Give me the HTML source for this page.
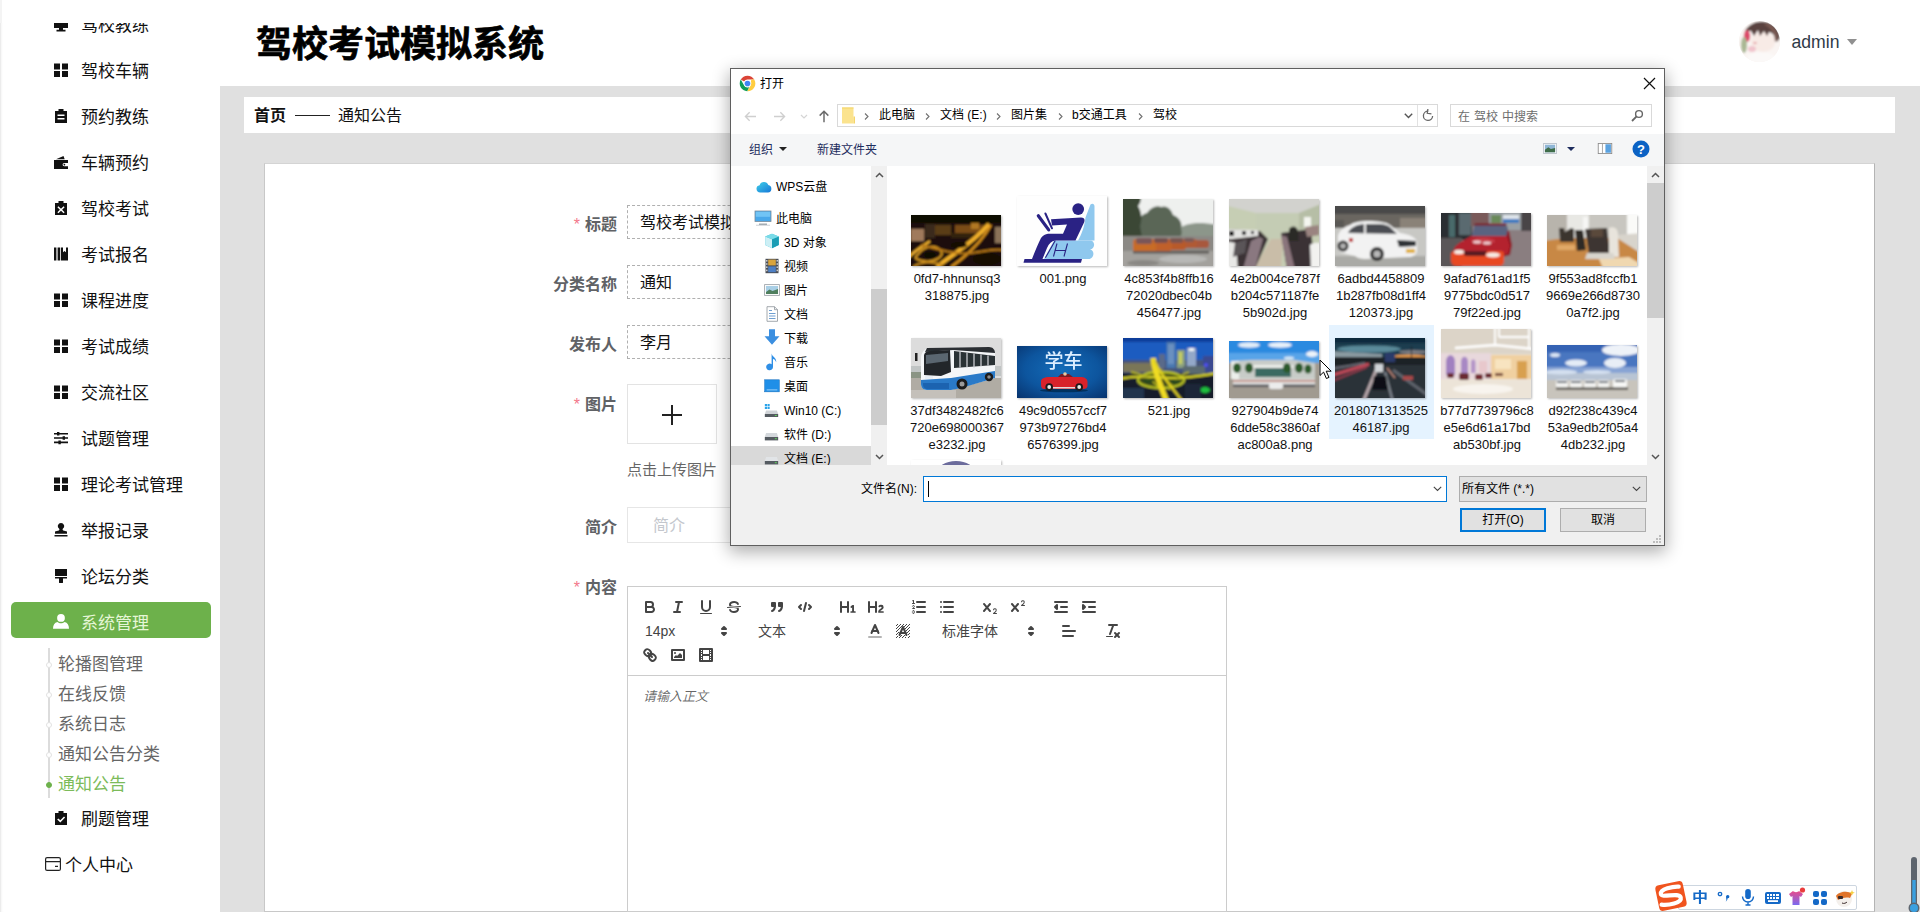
<!DOCTYPE html>
<html lang="zh-CN">
<head>
<meta charset="utf-8">
<title>驾校考试模拟系统</title>
<style>
*{box-sizing:border-box;margin:0;padding:0}
html,body{width:1920px;height:912px;overflow:hidden;background:#e0e0e0;
  font-family:"Liberation Sans","Noto Sans CJK SC",sans-serif;color:#000}
.abs{position:absolute}
/* ---------- sidebar ---------- */
#side{position:absolute;left:0;top:0;width:220px;height:912px;background:#fff;overflow:hidden;
  box-shadow:inset 1px 0 0 #ececec, inset 3px 0 2px -1px #f6f6f6}
.mi{position:absolute;left:0;width:220px;height:46px;line-height:46px;font-size:17px;color:#111}
.mi svg{position:absolute;left:54px;top:15px;width:14px;height:14px;fill:#111}
.mi span{position:absolute;left:81px;top:1px;white-space:nowrap}
#act{position:absolute;left:11px;top:602px;width:200px;height:36px;background:#6db14b;border-radius:5px}
.sub{position:absolute;left:58px;font-size:17px;color:#666;line-height:30px;height:30px;white-space:nowrap}
.dot{position:absolute;left:46px;width:6px;height:6px;border-radius:50%;background:#fff;border:1px solid #e2e2e2}
/* ---------- header ---------- */
#head{position:absolute;left:220px;top:0;width:1700px;height:86px;background:#fff}
#title{position:absolute;left:36px;top:16px;font-size:36px;font-weight:700;-webkit-text-stroke:0.700px #000;line-height:58px;white-space:nowrap;color:#000}
#crumb{position:absolute;left:244px;top:97px;width:1651px;height:36px;background:#fff;font-size:16px;line-height:38px;color:#111}
#card{position:absolute;left:264px;top:163px;width:1611px;height:749px;border-bottom:none;background:#fff;border:1px solid #c8c8c8;border-top-color:#d4d4d4;border-right-color:#b4b4b4}
.lab{position:absolute;left:497px;width:120px;font-size:16px;font-weight:700;color:#606266;white-space:nowrap;text-align:right;line-height:24px}
.lab i{font-style:normal;color:#f3788a;font-weight:400;margin-right:5px}
.inp{position:absolute;left:627px;width:400px;height:34px;border:1px dashed #b0b0b0;font-size:16px;line-height:34px;padding-left:12px;color:#111;background:#fff;white-space:nowrap}
/* ---------- quill ---------- */
#qtb{position:absolute;left:627px;top:586px;width:600px;height:90px;border:1px solid #ccc;background:#fff}
#qed{position:absolute;left:627px;top:675px;width:600px;height:237px;border-bottom:none;border:1px solid #ccc;background:#fff}
#qtb svg{position:absolute;width:18px;height:18px}
.qs{fill:none;stroke:#444;stroke-width:2;stroke-linecap:round;stroke-linejoin:round}
.qt{stroke-width:1}
.qf{fill:#444}
.qsf{fill:#444;stroke:#444;stroke-width:2;stroke-linecap:round;stroke-linejoin:round}
.ql{position:absolute;font-size:14px;color:#444;line-height:24px;top:32px;white-space:nowrap}
</style>
</head>
<body>
<div id="side">
<svg width="0" height="0" style="position:absolute"><defs>
<g id="i-grid"><rect x="0" y="0.5" width="6" height="6"/><rect x="8" y="0.5" width="6" height="6"/><rect x="0" y="8" width="6" height="6"/><rect x="8" y="8" width="6" height="6"/></g>
</defs></svg>
<div class="mi" style="top:2px"><svg viewBox="0 0 14 14" style="top:16px"><path d="M0 0h14v10H0zM5 10h4v1.800h2.500v1.700h-9v-1.700H5z"/></svg><span>驾校教练</span></div>
<div class="abs" style="left:0;top:0;width:220px;height:23px;background:#fff;box-shadow:inset 2px 0 0 #f4f4f4"></div>
<div class="mi" style="top:48px"><svg viewBox="0 0 14 14"><use href="#i-grid"/></svg><span>驾校车辆</span></div>
<div class="mi" style="top:94px"><svg viewBox="0 0 14 14"><path d="M4.5 0h5v2H13v12H1V2h3.5zM3.5 5.5v1.6h7V5.5zM3.5 9v1.6h7V9z" fill-rule="evenodd"/></svg><span>预约教练</span></div>
<div class="mi" style="top:140px"><svg viewBox="0 0 14 14"><path d="M2 4.2L9.5 1l1.2 3.2zM0 5h14v3H10.2a1.6 1.6 0 0 0 0 3.2H14V14H0z M10.4 8.8a.8.8 0 1 0 .01 0z" fill-rule="evenodd"/></svg><span>车辆预约</span></div>
<div class="mi" style="top:186px"><svg viewBox="0 0 14 14"><path d="M4.5 0h5v2H13v12H1V2h3.5zM4.4 5.2L3.4 6.2 5.9 8.7 3.4 11.2l1 1L7 9.7l2.6 2.5 1-1L8.1 8.7l2.5-2.5-1-1L7 7.7z" fill-rule="evenodd"/></svg><span>驾校考试</span></div>
<div class="mi" style="top:232px"><svg viewBox="0 0 14 14"><path d="M0 .5h2.400v13H0zM3.600 .5h2.600v13H3.600zM7 .5h2v4.800l1.500-1.300L12 5.300V.5h2v13H7z"/></svg><span>考试报名</span></div>
<div class="mi" style="top:278px"><svg viewBox="0 0 14 14"><use href="#i-grid"/></svg><span>课程进度</span></div>
<div class="mi" style="top:324px"><svg viewBox="0 0 14 14"><use href="#i-grid"/></svg><span>考试成绩</span></div>
<div class="mi" style="top:370px"><svg viewBox="0 0 14 14"><use href="#i-grid"/></svg><span>交流社区</span></div>
<div class="mi" style="top:416px"><svg viewBox="0 0 14 14"><path d="M0 2h3v-1h2.4v1H14v1.6H5.4v1H3v-1H0zM0 6.2h8.6v-1H11v1h3v1.6h-3v1H8.6v-1H0zM0 10.6h4.4v-1h2.4v1H14v1.6H6.8v1H4.4v-1H0z"/></svg><span>试题管理</span></div>
<div class="mi" style="top:462px"><svg viewBox="0 0 14 14"><use href="#i-grid"/></svg><span>理论考试管理</span></div>
<div class="mi" style="top:508px"><svg viewBox="0 0 14 14"><path d="M7 0a3.1 3.1 0 0 1 2 5.5c-.6.6-.6 1.600 .2 1.900l3.800 1v2.400H1V8.400l3.800-1c.8-.3.8-1.300.2-1.900A3.100 3.100 0 0 1 7 0zM.5 12h13v1.600H.5z"/></svg><span>举报记录</span></div>
<div class="mi" style="top:554px"><svg viewBox="0 0 14 14"><path d="M1 0h12v7H1zM1 8h12v1.600H9v3.400a2 2 0 0 1-4 0V9.600H1z"/></svg><span>论坛分类</span></div>
<div id="act"></div>
<div class="mi" style="top:597px;color:#e6f6d6"><svg viewBox="0 0 14 14" style="fill:#fff;top:16.500px;left:53px;width:16px;height:16px"><path d="M7 0a3.400 3.400 0 0 1 0 6.800A3.400 3.400 0 0 1 7 0zM3.800 7c1 .8 2 1.200 3.200 1.200S9.200 7.800 10.200 7C12.600 7.600 14 9.600 14 13H0C0 9.600 1.400 7.600 3.800 7z"/></svg><span style="top:4px">系统管理</span></div>
<div class="abs" style="left:48px;top:648px;width:2px;height:150px;background:#dcdcdc"></div>
<div class="dot" style="top:662px"></div><div class="sub" style="top:650px">轮播图管理</div>
<div class="dot" style="top:692px"></div><div class="sub" style="top:680px">在线反馈</div>
<div class="dot" style="top:722px"></div><div class="sub" style="top:710px">系统日志</div>
<div class="dot" style="top:752px"></div><div class="sub" style="top:740px">通知公告分类</div>
<div class="dot" style="top:782px;background:#6db14b;border-color:#6db14b"></div><div class="sub" style="top:770px;color:#7cbb5a">通知公告</div>
<div class="mi" style="top:796px"><svg viewBox="0 0 14 14"><path d="M4.500 0h5v2H13v12H1V2h3.500zM10 5.400L6.300 9.300 4.300 7.400 3.200 8.500l3.100 3 4.800-5z" fill-rule="evenodd"/></svg><span>刷题管理</span></div>
<div class="mi" style="top:842px"><svg viewBox="0 0 16 14" style="left:45px;width:16px;fill:none;stroke:#222;stroke-width:1.200"><rect x=".6" y=".6" width="14.800" height="12.800" rx="1.500"/><path d="M.6 4.600h14.800M10 9.300h3"/></svg><span style="left:65px">个人中心</span></div>
</div>
<!-- HEADER -->
<div id="head"><div id="title">驾校考试模拟系统</div>
<div class="abs" style="left:1519px;top:21px;width:41px;height:41px;border-radius:50%;overflow:hidden;background:#f8f2f0">
<svg viewBox="0 0 41 41" width="41" height="41"><defs><filter id="bl"><feGaussianBlur stdDeviation=".8"/></filter></defs><g filter="url(#bl)"><rect x="-3" y="-3" width="47" height="47" fill="#faf5f3"/><ellipse cx="24" cy="21" rx="12" ry="10" fill="#f8ebe6"/><path d="M6 10C10 2 20-1 28 1s13 8 13 16l-3 4c-1-5-4-9-8-10l-2 4-3-5-4 5-2-6-4 6-3-5z" fill="#5a4341"/><path d="M26 2c8 1 13 8 13 16l-3 3c0-8-4-14-10-17z" fill="#7a5a52"/><ellipse cx="8" cy="15" rx="3.200" ry="6" fill="#dc4a6a"/><ellipse cx="5" cy="24" rx="3" ry="8" fill="#aab894"/><ellipse cx="13" cy="28" rx="4" ry="3" fill="#f0c4cc"/><ellipse cx="16" cy="22" rx="2" ry="1" fill="#e6a0a8"/><ellipse cx="22" cy="37" rx="14" ry="6" fill="#fbf9f8"/></g></svg></div>
<div class="abs" style="left:1571.500px;top:29.500px;font-size:17.600px;line-height:24px;color:#2f3a48">admin</div>
<div class="abs" style="left:1626.500px;top:39px;width:0;height:0;border-left:5px solid transparent;border-right:5px solid transparent;border-top:6.500px solid #909090"></div>
</div>
<div id="crumb"><b class="abs" style="left:10px">首页</b><span class="abs" style="left:51px;top:18px;width:35px;height:1px;background:#222"></span><span class="abs" style="left:94px">通知公告</span></div>
<div id="card"></div>
<!-- FORM -->
<div class="lab" style="top:213px"><i>*</i>标题</div><div class="inp" style="top:205px">驾校考试模拟系统</div>
<div class="lab" style="top:273px">分类名称</div><div class="inp" style="top:265px">通知</div>
<div class="lab" style="top:333px">发布人</div><div class="inp" style="top:325px">李月</div>
<div class="lab" style="top:393px"><i>*</i>图片</div>
<div class="abs" style="left:627px;top:384px;width:90px;height:60px;border:1px solid #e3e3e3;background:#fff"></div>
<div class="abs" style="left:662px;top:414px;width:20px;height:2px;background:#222"></div><div class="abs" style="left:671px;top:405px;width:2px;height:20px;background:#222"></div>
<div class="abs" style="left:627px;top:459px;font-size:15px;line-height:22px;color:#666;white-space:nowrap">点击上传图片</div>
<div class="lab" style="top:516px">简介</div>
<div class="abs" style="left:627px;top:507px;width:400px;height:36px;border:1px solid #e6e6e6;background:#fff;font-size:16px;line-height:36px;padding-left:25px;color:#c4c7cd">简介</div>
<div class="lab" style="top:576px"><i>*</i>内容</div>
<div id="qtb">
<svg viewBox="0 0 18 18" style="left:13px;top:11px"><path class="qs" d="M5,4H9.5A2.5,2.5,0,0,1,12,6.500v0A2.5,2.5,0,0,1,9.500,9H5V4Z"/><path class="qs" d="M5,9h5.500A2.5,2.5,0,0,1,13,11.500v0A2.5,2.5,0,0,1,10.500,14H5V9Z"/></svg>
<svg viewBox="0 0 18 18" style="left:41px;top:11px"><line class="qs" x1="7" x2="13" y1="4" y2="4"/><line class="qs" x1="5" x2="11" y1="14" y2="14"/><line class="qs" x1="8" x2="10" y1="14" y2="4"/></svg>
<svg viewBox="0 0 18 18" style="left:69px;top:11px"><path class="qs" d="M5,3V9a4.012,4.012,0,0,0,4,4H9a4.012,4.012,0,0,0,4-4V3"/><rect class="qf" height="1" rx="0.5" ry="0.5" width="12" x="3" y="15"/></svg>
<svg viewBox="0 0 18 18" style="left:97px;top:11px"><line class="qs qt" x1="15.5" x2="2.5" y1="8.500" y2="9.500"/><path class="qf" d="M9.007,8C6.542,7.791,6,7.519,6,6.500,6,5.792,7.283,5,9,5c1.571,0,2.765.679,2.969,1.309a1,1,0,0,0,1.900-.617C13.356,4.106,11.354,3,9,3,6.200,3,4,4.538,4,6.500a3.200,3.200,0,0,0,.5,1.843Z"/><path class="qf" d="M8.984,10C11.457,10.208,12,10.479,12,11.500c0,0.708-1.283,1.500-3,1.500-1.571,0-2.765-.679-2.969-1.309a1,1,0,1,0-1.900.617C4.644,13.894,6.646,15,9,15c2.800,0,5-1.538,5-3.500a3.200,3.200,0,0,0-.5-1.843Z"/></svg>
<svg viewBox="0 0 18 18" style="left:140px;top:11px"><rect class="qsf" height="3" width="3" x="4" y="5"/><rect class="qsf" height="3" width="3" x="11" y="5"/><path class="qsf" fill-rule="evenodd" d="M7,8c0,4.031-3,5-3,5"/><path class="qsf" fill-rule="evenodd" d="M14,8c0,4.031-3,5-3,5"/></svg>
<svg viewBox="0 0 18 18" style="left:168px;top:11px"><polyline class="qs" points="5 7 3 9 5 11"/><polyline class="qs" points="13 7 15 9 13 11"/><line class="qs" x1="10" x2="8" y1="5" y2="13"/></svg>
<svg viewBox="0 0 18 18" style="left:211px;top:11px"><path class="qf" d="M10,4V14a1,1,0,0,1-2,0V10H3v4a1,1,0,0,1-2,0V4A1,1,0,0,1,3,4V8H8V4a1,1,0,0,1,2,0Zm6.068,9.209H14.990V7.599a.541.541,0,0,0-.605-.605h-.627a1.011,1.011,0,0,0-.748.297L11.645,8.566a.544.544,0,0,0-.022.858l.286.308a.539.539,0,0,0,.847.033l.099-.088a1.214,1.214,0,0,0,.242-.353h.022s-.011.309-.011.605V13.209H12.041a.541.541,0,0,0-.605.605v.439a.541.541,0,0,0,.605.605h4.027a.541.541,0,0,0,.605-.605v-.439A.541.541,0,0,0,16.068,13.209Z"/></svg>
<svg viewBox="0 0 18 18" style="left:239px;top:11px"><path class="qf" d="M16.740,13.814v.439a.541.541,0,0,1-.605.605H11.855a.584.584,0,0,1-.649-.605V14.013c0-2.905,3.399-3.422,3.399-4.555a.777.777,0,0,0-.847-.781,1.177,1.177,0,0,0-.836.385c-.275.264-.561.374-.858.132l-.429-.341c-.308-.242-.385-.518-.154-.814a2.972,2.972,0,0,1,2.454-1.177,2.454,2.454,0,0,1,2.684,2.409c0,2.453-3.179,2.927-3.278,3.938h2.794A.541.541,0,0,1,16.740,13.814ZM9,3A1,1,0,0,0,8,4V8H3V4A1,1,0,0,0,1,4V14a1,1,0,0,0,2,0V10H8v4a1,1,0,0,0,2,0V4A1,1,0,0,0,9,3Z"/></svg>
<svg viewBox="0 0 18 18" style="left:282px;top:11px"><line class="qs" x1="7" x2="15" y1="4" y2="4"/><line class="qs" x1="7" x2="15" y1="9" y2="9"/><line class="qs" x1="7" x2="15" y1="14" y2="14"/><line class="qs qt" x1="2.5" x2="4.5" y1="5.500" y2="5.500"/><path class="qf" d="M3.500,6A0.500,0.500,0,0,1,3,5.500V3.085l-0.276.138A0.500,0.500,0,0,1,2.053,3c-0.124-.247-0.023-0.324.224-0.447l1-.5A0.500,0.500,0,0,1,4,2.500v3A0.500,0.500,0,0,1,3.500,6Z"/><path class="qs qt" d="M4.500,10.500h-2c0-.234,1.850-1.076,1.850-2.234A0.959,0.959,0,0,0,2.500,8.156"/><path class="qs qt" d="M2.500,14.846a0.959,0.959,0,0,0,1.850-.109A0.700,0.700,0,0,0,3.750,14a0.688,0.688,0,0,0,.6-0.736,0.959,0.959,0,0,0-1.850-.109"/></svg>
<svg viewBox="0 0 18 18" style="left:310px;top:11px"><line class="qs" x1="6" x2="15" y1="4" y2="4"/><line class="qs" x1="6" x2="15" y1="9" y2="9"/><line class="qs" x1="6" x2="15" y1="14" y2="14"/><line class="qs" x1="3" x2="3" y1="4" y2="4"/><line class="qs" x1="3" x2="3" y1="9" y2="9"/><line class="qs" x1="3" x2="3" y1="14" y2="14"/></svg>
<svg viewBox="0 0 18 18" style="left:353px;top:11px"><path class="qf" d="M15.500,15H13.861a3.858,3.858,0,0,0,1.914-2.975,1.800,1.800,0,0,0-1.600-1.751A1.921,1.921,0,0,0,12.021,11.700a0.500,0.500,0,1,0,.957.291h0a0.914,0.914,0,0,1,1.053-.725,0.810,0.810,0,0,1,.744.762c0,1.076-1.170,1.870-1.940,2.431A1.456,1.456,0,0,0,12,15.500a0.500,0.500,0,0,0,.5.500h3A0.500,0.500,0,0,0,15.500,15Z"/><path class="qf" d="M9.650,5.241a1,1,0,0,0-1.409.108L6,7.964,3.759,5.349A1,1,0,0,0,2.192,6.592L4.684,9.500,2.241,12.350A1,1,0,0,0,3.710,13.707L6,11.036,8.241,13.650a1,1,0,1,0,1.567-1.243L7.316,9.500,9.759,6.651A1,1,0,0,0,9.650,5.241Z"/></svg>
<svg viewBox="0 0 18 18" style="left:381px;top:11px"><path class="qf" d="M15.500,7H13.861a4.015,4.015,0,0,0,1.914-2.975,1.800,1.800,0,0,0-1.600-1.751A1.922,1.922,0,0,0,12.021,3.700a0.500,0.500,0,1,0,.957.291,0.917,0.917,0,0,1,1.053-.725,0.810,0.810,0,0,1,.744.762c0,1.077-1.164,1.925-1.934,2.486A1.423,1.423,0,0,0,12,7.500a0.500,0.500,0,0,0,.5.500h3A0.500,0.500,0,0,0,15.500,7Z"/><path class="qf" d="M9.651,5.241a1,1,0,0,0-1.410.108L6,7.964,3.759,5.349a1,1,0,1,0-1.519,1.300L4.683,9.500,2.241,12.350a1,1,0,1,0,1.519,1.300L6,11.036,8.241,13.650a1,1,0,0,0,1.519-1.300L7.317,9.500,9.759,6.651A1,1,0,0,0,9.651,5.241Z"/></svg>
<svg viewBox="0 0 18 18" style="left:424px;top:11px"><line class="qs" x1="3" x2="15" y1="14" y2="14"/><line class="qs" x1="3" x2="15" y1="4" y2="4"/><line class="qs" x1="9" x2="15" y1="9" y2="9"/><polyline class="qs" points="5 7 5 11 3 9 5 7"/></svg>
<svg viewBox="0 0 18 18" style="left:452px;top:11px"><line class="qs" x1="3" x2="15" y1="14" y2="14"/><line class="qs" x1="3" x2="15" y1="4" y2="4"/><line class="qs" x1="9" x2="15" y1="9" y2="9"/><polyline class="qsf" points="3 7 3 11 5 9 3 7"/></svg>
<svg viewBox="0 0 18 18" style="left:87px;top:35px"><polygon class="qs" points="7 11 9 13 11 11 7 11"/><polygon class="qs" points="7 7 9 5 11 7 7 7"/></svg>
<svg viewBox="0 0 18 18" style="left:200px;top:35px"><polygon class="qs" points="7 11 9 13 11 11 7 11"/><polygon class="qs" points="7 7 9 5 11 7 7 7"/></svg>
<svg viewBox="0 0 18 18" style="left:238px;top:35px"><line class="qs" style="opacity:.4" x1="3" x2="15" y1="15" y2="15"/><polyline class="qs" points="5.500 11 9 3 12.500 11"/><line class="qs" x1="11.630" x2="6.380" y1="9" y2="9"/></svg>
<svg viewBox="0 0 18 18" style="left:266px;top:35px"><rect class="qf" height="1" width="1" x="4" y="4"/><rect class="qf" height="1" width="1" x="2" y="6"/><rect class="qf" height="1" width="1" x="3" y="5"/><rect class="qf" height="1" width="1" x="4" y="7"/><rect class="qf" height="1" width="1" x="2" y="12"/><rect class="qf" height="1" width="1" x="2" y="9"/><rect class="qf" height="1" width="1" x="2" y="15"/><rect class="qf" height="1" width="1" x="3" y="8"/><rect class="qf" height="1" width="1" x="12" y="2"/><rect class="qf" height="1" width="1" x="11" y="3"/><rect class="qf" height="1" width="1" x="2" y="3"/><rect class="qf" height="1" width="1" x="6" y="2"/><rect class="qf" height="1" width="1" x="3" y="2"/><rect class="qf" height="1" width="1" x="5" y="3"/><rect class="qf" height="1" width="1" x="9" y="2"/><rect class="qf" height="1" width="1" x="15" y="14"/><rect class="qf" height="1" width="1" x="13" y="7"/><rect class="qf" height="1" width="1" x="15" y="5"/><rect class="qf" height="1" width="1" x="14" y="6"/><rect class="qf" height="1" width="1" x="15" y="8"/><rect class="qf" height="1" width="1" x="14" y="9"/><rect class="qf" height="1" width="1" x="14" y="3"/><rect class="qf" height="1" width="1" x="15" y="2"/><rect class="qf" height="1" width="1" x="12" y="5"/><rect class="qf" height="1" width="1" x="13" y="4"/><rect class="qf" height="1" width="1" x="9" y="14"/><rect class="qf" height="1" width="1" x="8" y="15"/><rect class="qf" height="1" width="1" x="5" y="15"/><rect class="qf" height="1" width="1" x="11" y="15"/><rect class="qf" height="1" width="1" x="14" y="15"/><rect class="qf" height="1" width="1" x="15" y="11"/><rect class="qf" height="1" width="1" x="5" y="6"/><rect class="qf" height="1" width="1" x="3" y="11"/><rect class="qf" height="1" width="1" x="3" y="14"/><rect class="qf" height="1" width="1" x="13" y="10"/><rect class="qf" height="1" width="1" x="14" y="12"/><rect class="qf" height="1" width="1" x="6" y="14"/><rect class="qf" height="1" width="1" x="10" y="13"/><rect class="qf" height="1" width="1" x="7" y="13"/><rect class="qf" height="1" width="1" x="8" y="3"/><rect class="qf" height="1" width="1" x="6" y="5"/><rect class="qf" height="1" width="1" x="4" y="10"/><rect class="qf" height="1" width="1" x="12" y="8"/><rect class="qf" height="1" width="1" x="11" y="6"/><rect class="qf" height="1" width="1" x="7" y="4"/><rect class="qf" height="1" width="1" x="10" y="4"/><polyline class="qs" points="5.500 13 9 5 12.500 13"/><line class="qs" x1="11.630" x2="6.380" y1="11" y2="11"/></svg>
<svg viewBox="0 0 18 18" style="left:394px;top:35px"><polygon class="qs" points="7 11 9 13 11 11 7 11"/><polygon class="qs" points="7 7 9 5 11 7 7 7"/></svg>
<svg viewBox="0 0 18 18" style="left:432px;top:35px"><line class="qs" x1="3" x2="15" y1="9" y2="9"/><line class="qs" x1="3" x2="13" y1="14" y2="14"/><line class="qs" x1="3" x2="9" y1="4" y2="4"/></svg>
<svg viewBox="0 0 18 18" style="left:476px;top:35px"><line class="qs" x1="5" x2="13" y1="3" y2="3"/><line class="qs" x1="6" x2="9.350" y1="12" y2="3"/><line class="qs" x1="11" x2="15" y1="11" y2="15"/><line class="qs" x1="15" x2="11" y1="11" y2="15"/><rect class="qf" height="1" rx="0.5" ry="0.5" width="7" x="2" y="14"/></svg>
<svg viewBox="0 0 18 18" style="left:13px;top:59px"><line class="qs" x1="7" x2="11" y1="7" y2="11"/><path class="qs" d="M8.900,4.577a3.476,3.476,0,0,1,.360,4.679A3.476,3.476,0,0,1,4.577,8.900C3.185,7.500,2.035,6.400,4.217,4.217S7.500,3.185,8.900,4.577Z"/><path class="qs" d="M13.423,9.100a3.476,3.476,0,0,0-4.679-.360,3.476,3.476,0,0,0,.360,4.679c1.392,1.392,2.500,2.542,4.679.360S14.815,10.500,13.423,9.100Z"/></svg>
<svg viewBox="0 0 18 18" style="left:41px;top:59px"><rect class="qs" height="10" width="12" x="3" y="4"/><circle class="qf" cx="6" cy="7" r="1"/><polyline class="qf" points="5 12 5 11 7 9 8 10 11 7 13 9 13 12 5 12"/></svg>
<svg viewBox="0 0 18 18" style="left:69px;top:59px"><rect class="qs" height="12" width="12" x="3" y="3"/><rect class="qf" height="12" width="1" x="5" y="3"/><rect class="qf" height="12" width="1" x="12" y="3"/><rect class="qf" height="2" width="8" x="5" y="8"/><rect class="qf" height="1" width="3" x="3" y="5"/><rect class="qf" height="1" width="3" x="3" y="7"/><rect class="qf" height="1" width="3" x="3" y="10"/><rect class="qf" height="1" width="3" x="3" y="12"/><rect class="qf" height="1" width="3" x="12" y="5"/><rect class="qf" height="1" width="3" x="12" y="7"/><rect class="qf" height="1" width="3" x="12" y="10"/><rect class="qf" height="1" width="3" x="12" y="12"/></svg>
<span class="ql" style="left:17px;top:32px">14px</span>
<span class="ql" style="left:130px;top:32px">文本</span>
<span class="ql" style="left:314px;top:32px">标准字体</span>
</div>
<div id="qed"><div class="abs" style="left:15px;top:12px;font-size:13px;line-height:18px;font-style:italic;color:rgba(0,0,0,.6);white-space:nowrap">请输入正文</div></div>
<style>
#dlg{position:absolute;left:730px;top:68px;width:935px;height:478px;background:#fff;border:1px solid #5f5f5f;
 box-shadow:0 5px 16px 1px rgba(0,0,0,.32);font-size:12px;color:#000;overflow:hidden}
#dlg .t{position:absolute;white-space:nowrap;line-height:16px;font-size:12px}
#dtool{position:absolute;left:0;top:65px;width:933px;height:32px;background:#f5f6f7}
#dbot{position:absolute;left:0;top:396px;width:933px;height:80px;background:#f0f0f0}
#dnav{position:absolute;left:0;top:97px;width:140px;height:299px;background:#fff;overflow:hidden}
#dnav .t{left:45px}
#dnav svg{position:absolute;width:16px;height:16px}
#dnav>*{margin-top:2px}
#dnav>.t{margin-top:3px}
#dfiles{position:absolute;left:156px;top:97px;width:760px;height:299px;background:#fff;overflow:hidden}
.fn{position:absolute;width:106px;text-align:center;font-size:13px;line-height:17px;color:#111;white-space:nowrap;letter-spacing:0}
.th{position:absolute;box-shadow:1px 1px 2px rgba(0,0,0,.28);overflow:hidden}
.th svg{display:block;width:100%;height:100%}
.sb{position:absolute;width:17px;background:#f0f0f0}
.sb b{position:absolute;left:0;width:17px;background:#cdcdcd}
.addr{position:absolute;top:35px;height:23px;border:1px solid #d9d9d9;background:#fff}
.chev{position:absolute;top:43.500px;width:5px;height:7px}
</style>
<div id="dlg">
<!-- title -->
<svg class="abs" style="left:7.500px;top:5.500px" width="17" height="17" viewBox="0 0 48 48"><circle cx="24" cy="24" r="22" fill="#fff"/><path d="M24 2a22 22 0 0 1 19.050 11H24a11 11 0 0 0-9.530 5.500L5 13A22 22 0 0 1 24 2z" fill="#db4437"/><path d="M43.050 13A22 22 0 0 1 23 46l9.530-16.500A11 11 0 0 0 33.530 18.500L35 13z" fill="#ffcd40"/><path d="M23 46A22 22 0 0 1 5 13l9.470 16.500A11 11 0 0 0 29 33.800z" fill="#0f9d58"/><circle cx="24" cy="24" r="10" fill="#fff"/><circle cx="24" cy="24" r="8" fill="#4285f4"/></svg>
<div class="t" style="left:29px;top:7px">打开</div>
<svg class="abs" style="left:912px;top:8px" width="13" height="13" viewBox="0 0 13 13"><path d="M1 1l11 11M12 1L1 12" stroke="#111" stroke-width="1.200" fill="none"/></svg>
<!-- nav row -->
<svg class="abs" style="left:13px;top:42px" width="13" height="11" viewBox="0 0 15 13"><path d="M14 6.500H2M6.500 1.500L1.500 6.500l5 5" stroke="#cfcfcf" stroke-width="1.600" fill="none"/></svg>
<svg class="abs" style="left:42px;top:42px" width="13" height="11" viewBox="0 0 15 13"><path d="M1 6.500h12M8.500 1.500l5 5-5 5" stroke="#cfcfcf" stroke-width="1.600" fill="none"/></svg>
<svg class="abs" style="left:69px;top:45px" width="8" height="5" viewBox="0 0 8 5"><path d="M1 1l3 3 3-3" stroke="#d5d5d5" stroke-width="1.200" fill="none"/></svg>
<svg class="abs" style="left:87px;top:41px" width="12" height="13" viewBox="0 0 13 15"><path d="M6.500 14V2M1.500 6.500l5-5 5 5" stroke="#6a6a6a" stroke-width="1.700" fill="none"/></svg>
<div class="addr" style="left:106px;width:601px"></div>
<div class="abs" style="left:686px;top:36px;width:1px;height:21px;background:#e2e2e2"></div>
<svg class="abs" style="left:111px;top:38px" width="14" height="17" viewBox="0 0 14 17"><path d="M0 .5h11.500v16H0z" fill="#fbe38e"/><path d="M11.500 9.500H13v7h-1.500z" fill="#f5d56a"/><path d="M0 .5h11.500v1H0z" fill="#f3d467"/></svg>
<svg class="chev" style="left:133px" viewBox="0 0 5 7"><path d="M1 .5l3 3-3 3" stroke="#707070" stroke-width="1.100" fill="none"/></svg>
<div class="t" style="left:148px;top:38px">此电脑</div>
<svg class="chev" style="left:194px" viewBox="0 0 5 7"><path d="M1 .5l3 3-3 3" stroke="#707070" stroke-width="1.100" fill="none"/></svg>
<div class="t" style="left:209px;top:38px">文档 (E:)</div>
<svg class="chev" style="left:265px" viewBox="0 0 5 7"><path d="M1 .5l3 3-3 3" stroke="#707070" stroke-width="1.100" fill="none"/></svg>
<div class="t" style="left:280px;top:38px">图片集</div>
<svg class="chev" style="left:327px" viewBox="0 0 5 7"><path d="M1 .5l3 3-3 3" stroke="#707070" stroke-width="1.100" fill="none"/></svg>
<div class="t" style="left:341px;top:38px">b交通工具</div>
<svg class="chev" style="left:407px" viewBox="0 0 5 7"><path d="M1 .5l3 3-3 3" stroke="#707070" stroke-width="1.100" fill="none"/></svg>
<div class="t" style="left:422px;top:38px">驾校</div>
<svg class="abs" style="left:673px;top:44px" width="9" height="6" viewBox="0 0 9 6"><path d="M.8 .8l3.700 3.700L8.200 .8" stroke="#555" stroke-width="1.400" fill="none"/></svg>
<svg class="abs" style="left:691px;top:40px" width="12" height="13" viewBox="0 0 12 13"><path d="M6.200 2.200A4.600 4.600 0 1 0 10.600 7" stroke="#666" stroke-width="1.300" fill="none"/><path d="M5.600 0v4.400h4.200" fill="none" stroke="#666" stroke-width="1.300" transform="rotate(8 6 2)"/></svg>
<div class="addr" style="left:719px;width:202px"></div>
<div class="t" style="left:727px;top:40px;color:#6d6d6d;word-spacing:.7px">在 驾校 中搜索</div>
<svg class="abs" style="left:900px;top:40px" width="13" height="13" viewBox="0 0 13 13"><circle cx="8" cy="5" r="3.400" stroke="#666" stroke-width="1.400" fill="none"/><path d="M5.600 7.400L1 12" stroke="#666" stroke-width="1.800"/></svg>
<!-- tool row -->
<div id="dtool">
<div class="t" style="left:18px;top:8px;color:#1e2d5e">组织</div>
<div class="abs" style="left:48px;top:13px;border-left:4px solid transparent;border-right:4px solid transparent;border-top:4.500px solid #222"></div>
<div class="t" style="left:86px;top:8px;color:#1e2d5e">新建文件夹</div>
<svg class="abs" style="left:812px;top:9px" width="14" height="11" viewBox="0 0 16 13"><rect x=".5" y=".5" width="15" height="12" fill="#fdfdfd" stroke="#b4bcc6"/><rect x="2" y="2" width="12" height="9" fill="#8fb6d6"/><path d="M2 8l4-3 3 2 5-1v5H2z" fill="#3f6d4a"/></svg>
<div class="abs" style="left:836px;top:13px;border-left:4px solid transparent;border-right:4px solid transparent;border-top:4.500px solid #1e2d5e"></div>
<svg class="abs" style="left:866px;top:9px" width="16" height="11" viewBox="0 0 17 13"><rect x=".5" y=".5" width="16" height="12" fill="#fff" stroke="#8a8a8a"/><rect x="9" y="1.500" width="6.500" height="10" fill="#5aa2e0"/><path d="M5.500 1v11" stroke="#9a9a9a"/></svg>
<svg class="abs" style="left:901px;top:6px" width="18" height="18" viewBox="0 0 18 18"><circle cx="9" cy="9" r="8.500" fill="#0b62c4"/><text x="9" y="13.500" font-size="13" font-weight="700" text-anchor="middle" fill="#fff" font-family="Liberation Sans,sans-serif">?</text></svg>
</div>
<!-- nav tree -->
<div id="dnav">
<svg style="left:25px;top:11px" viewBox="0 0 16 16"><defs><linearGradient id="wps" x1="0" y1="0" x2="1" y2="1"><stop offset="0" stop-color="#3fd0e8"/><stop offset="1" stop-color="#1677d8"/></linearGradient></defs><path d="M4.200 13.500a3.700 3.700 0 0 1-.6-7.350A4.600 4.600 0 0 1 12.300 6a3.800 3.800 0 0 1-.3 7.500z" fill="url(#wps)"/></svg>
<div class="t" style="top:10px">WPS云盘</div>
<svg style="left:23px;top:42px;width:18px" viewBox="0 0 18 16"><rect x="1" y="1" width="16" height="10.500" fill="#49a8ea" stroke="#7a8a99" stroke-width=".8"/><rect x="1.800" y="1.800" width="14.400" height="5" fill="#7ccbf7" opacity=".8"/><rect x="5" y="13.600" width="8" height="1.200" fill="#8a949e"/><rect x="2" y="14.800" width="14" height=".7" fill="#b5bcc3"/></svg>
<div class="t" style="top:42px">此电脑</div>
<svg style="left:33px;top:65px" viewBox="0 0 16 16"><path d="M8 .8l6.800 2.700v8.600L8 15.200 1.200 12.100V3.500z" fill="#35c1d6"/><path d="M8 6.200l6.800-2.700v8.600L8 15.200z" fill="#1a9db4"/><path d="M1.200 3.500L8 6.200v9L1.200 12.100z" fill="#cdeff5"/><path d="M8 .8l6.800 2.700L8 6.200 1.200 3.500z" fill="#7adbe8"/></svg>
<div class="t" style="left:53px;top:66px">3D 对象</div>
<svg style="left:33px;top:90px" viewBox="0 0 16 16"><rect x="1.500" y=".8" width="13" height="14.400" fill="#4a4f57"/><rect x="4.200" y="1.600" width="7.600" height="5.800" fill="#d9a43c"/><rect x="4.200" y="8.400" width="7.600" height="5.800" fill="#4d7fc4"/><g fill="#e8e8e8"><rect x="2.200" y="2" width="1.200" height="1.600"/><rect x="2.200" y="5.200" width="1.200" height="1.600"/><rect x="2.200" y="8.400" width="1.200" height="1.600"/><rect x="2.200" y="11.600" width="1.200" height="1.600"/><rect x="12.600" y="2" width="1.200" height="1.600"/><rect x="12.600" y="5.200" width="1.200" height="1.600"/><rect x="12.600" y="8.400" width="1.200" height="1.600"/><rect x="12.600" y="11.600" width="1.200" height="1.600"/></g></svg>
<div class="t" style="left:53px;top:90px">视频</div>
<svg style="left:33px;top:114px" viewBox="0 0 16 16"><rect x=".6" y="2.600" width="14.800" height="10.800" fill="#fafafa" stroke="#9aa0a6" stroke-width=".8"/><rect x="2" y="4" width="12" height="8" fill="#a9cfe6"/><path d="M2 10l3.500-2.500 3 1.500 5.500-2v5H2z" fill="#4f7f5e"/></svg>
<div class="t" style="left:53px;top:114px">图片</div>
<svg style="left:33px;top:138px" viewBox="0 0 16 16"><path d="M3 .7h7.500L13.500 3.700v11.600H3z" fill="#fff" stroke="#8d949b" stroke-width=".8"/><g stroke="#4a86c5" stroke-width=".8"><path d="M5 4.500h3M5 7.500h6.500M5 10h6.500M5 12.500h6.500"/></g><path d="M10.500 .7v3h3" fill="none" stroke="#8d949b" stroke-width=".8"/></svg>
<div class="t" style="left:53px;top:138px">文档</div>
<svg style="left:33px;top:161px" viewBox="0 0 16 16"><path d="M5 .3h6v7h4.500L8 15.700 .5 7.300H5z" fill="#3b8fe0"/></svg>
<div class="t" style="left:53px;top:162px">下载</div>
<svg style="left:33px;top:185px;height:18px" viewBox="0 0 16 18"><path d="M7.600 .5c.8 3.600 5 4 4.600 8.800-.6-2.400-2.200-3.200-3.200-3.400v8a3.400 3.400 0 1 1-1.400-2.700z" fill="#2f8fe6"/></svg>
<div class="t" style="left:53px;top:186px">音乐</div>
<svg style="left:33px;top:210px;width:16px" viewBox="0 0 18 16" preserveAspectRatio="none"><rect x=".8" y="1.800" width="16.400" height="12" fill="#1f8fe8" stroke="#1670c0" stroke-width=".6"/><rect x="3" y="11.400" width="12" height="1" fill="#9ad0f7"/></svg>
<div class="t" style="left:53px;top:210px">桌面</div>
<svg style="left:33px;top:234px;width:15px" viewBox="0 0 18 16" preserveAspectRatio="none"><g fill="#2aa3ea"><rect x="1" y="2" width="2.600" height="2.200"/><rect x="4.200" y="2" width="2.600" height="2.200"/><rect x="1" y="4.800" width="2.600" height="2.200"/><rect x="4.200" y="4.800" width="2.600" height="2.200"/></g><path d="M2.500 8.500h13l1.500 3.500H1z" fill="#cfd3d7"/><rect x="1" y="12" width="16" height="3" fill="#555b61"/><rect x="13" y="13" width="2.400" height="1" fill="#5fd25a"/></svg>
<div class="t" style="left:53px;top:234px">Win10 (C:)</div>
<svg style="left:33px;top:258px;width:15px" viewBox="0 0 18 16" preserveAspectRatio="none"><path d="M2.500 7h13l1.500 4H1z" fill="#d4d8dc"/><rect x="1" y="11" width="16" height="3.400" fill="#555b61"/><rect x="13" y="12.200" width="2.400" height="1" fill="#5fd25a"/></svg>
<div class="t" style="left:53px;top:258px">软件 (D:)</div>
<div class="abs" style="left:0;top:278px;width:140px;height:24px;background:#d9d9d9"></div>
<svg style="left:33px;top:282px;width:15px" viewBox="0 0 18 16" preserveAspectRatio="none"><path d="M2.500 7h13l1.500 4H1z" fill="#e1e4e7"/><rect x="1" y="11" width="16" height="3.400" fill="#555b61"/><rect x="13" y="12.200" width="2.400" height="1" fill="#5fd25a"/></svg>
<div class="t" style="left:53px;top:282px">文档 (E:)</div>
</div>
<div class="sb" style="left:140px;top:97px;height:299px;width:16px"><b style="top:123px;height:136px;width:16px"></b>
<svg class="abs" style="left:4px;top:6px" width="9" height="6" viewBox="0 0 9 6"><path d="M1 5l3.500-3.500L8 5" stroke="#555" stroke-width="1.500" fill="none"/></svg>
<svg class="abs" style="left:4px;top:288px" width="9" height="6" viewBox="0 0 9 6"><path d="M1 1l3.500 3.500L8 1" stroke="#555" stroke-width="1.500" fill="none"/></svg></div>
<div class="sb" style="left:916px;top:97px;height:299px"><b style="top:17px;height:135px"></b>
<svg class="abs" style="left:4px;top:6px" width="9" height="6" viewBox="0 0 9 6"><path d="M1 5l3.500-3.500L8 5" stroke="#555" stroke-width="1.500" fill="none"/></svg>
<svg class="abs" style="left:4px;top:288px" width="9" height="6" viewBox="0 0 9 6"><path d="M1 1l3.500 3.500L8 1" stroke="#555" stroke-width="1.500" fill="none"/></svg></div>
<!-- bottom -->
<div id="dbot">
<div class="t" style="left:130px;top:16px">文件名(N):</div>
<div class="abs" style="left:192px;top:11px;width:524px;height:26px;background:#fff;border:1px solid #0078d7"></div>
<div class="abs" style="left:197px;top:16px;width:1px;height:16px;background:#000"></div>
<svg class="abs" style="left:702px;top:21px" width="9" height="6" viewBox="0 0 9 6"><path d="M.8 .8l3.700 3.700L8.200 .8" stroke="#444" stroke-width="1.100" fill="none"/></svg>
<div class="abs" style="left:728px;top:11px;width:188px;height:26px;background:#e1e1e1;border:1px solid #adadad"></div>
<div class="t" style="left:731px;top:16px">所有文件 (*.*)</div>
<svg class="abs" style="left:901px;top:21px" width="9" height="6" viewBox="0 0 9 6"><path d="M.8 .8l3.700 3.700L8.200 .8" stroke="#444" stroke-width="1.100" fill="none"/></svg>
<div class="abs" style="left:729px;top:43px;width:86px;height:24px;background:#e1e1e1;border:2px solid #0078d7"></div>
<div class="t" style="left:729px;top:47px;width:86px;text-align:center">打开(O)</div>
<div class="abs" style="left:829px;top:43px;width:86px;height:24px;background:#e1e1e1;border:1px solid #adadad"></div>
<div class="t" style="left:829px;top:47px;width:86px;text-align:center">取消</div>
<svg class="abs" style="left:922px;top:70px" width="8" height="8" viewBox="0 0 8 8"><g fill="#bdbdbd"><rect x="6" y="0" width="2" height="2"/><rect x="3" y="3" width="2" height="2"/><rect x="6" y="3" width="2" height="2"/><rect x="0" y="6" width="2" height="2"/><rect x="3" y="6" width="2" height="2"/><rect x="6" y="6" width="2" height="2"/></g></svg>
</div>
<div id="dfiles">
<div class="abs" style="left:442px;top:159px;width:105px;height:114px;background:#e5f3ff"></div>
<div class="th" style="left:24px;top:49px;width:90px;height:51px"><svg viewBox="0 0 90 51" preserveAspectRatio="none"><defs><filter id="b1" x="-5%" y="-5%" width="110%" height="110%"><feGaussianBlur stdDeviation="0.8"/></filter></defs><g filter="url(#b1)"><rect x="-5" y="-5" width="100" height="61" fill="#1a1108"/>
<rect x="-5" y="-5" width="100" height="13" fill="#110b05"/>
<rect x="0" y="14" width="13" height="12" fill="#a07a5c"/><rect x="14" y="9" width="10" height="14" fill="#3a2c1c"/><rect x="24" y="10" width="16" height="10" fill="#5a3c18"/><rect x="44" y="10" width="30" height="9" fill="#7a4c14"/><rect x="60" y="8" width="8" height="6" fill="#b07820"/><rect x="84" y="12" width="8" height="16" fill="#8a7258"/>
<rect x="40" y="18" width="30" height="5" fill="#30200e"/>
<path d="M26 52C40 40 60 30 78 9" stroke="#f2b02c" stroke-width="4" fill="none"/>
<path d="M40 52C54 42 70 28 80 10" stroke="#d8901c" stroke-width="2.500" fill="none"/>
<path d="M-2 42C6 34 14 30 19 26" stroke="#f0b030" stroke-width="2.500" fill="none"/>
<path d="M8 38C14 30 26 30 30 36S22 48 12 46 4 42 8 38z" stroke="#d89a24" stroke-width="2" fill="none"/>
<path d="M10 30C26 34 44 40 60 38S80 34 92 35" stroke="#b87818" stroke-width="2" fill="none"/>
<path d="M2 52C10 46 22 46 32 50" stroke="#c88a1c" stroke-width="2" fill="none"/>
<ellipse cx="19" cy="40" rx="6" ry="3" fill="#0c0805"/><ellipse cx="76" cy="44" rx="14" ry="6" fill="#120c06"/><ellipse cx="48" cy="30" rx="8" ry="3" fill="#120c06"/></g></svg></div>
<div class="fn" style="left:17px;top:104px">0fd7-hhnunsq3<br>318875.jpg</div>
<div class="th" style="left:130px;top:30px;width:90px;height:70px"><svg viewBox="0 0 90 70" preserveAspectRatio="none"><defs><filter id="b2" x="-5%" y="-5%" width="110%" height="110%"><feGaussianBlur stdDeviation="0.35"/></filter></defs><g filter="url(#b2)"><rect x="-5" y="-5" width="100" height="80" fill="#fefefe"/>
<path d="M73.500 8.500c2-1.500 4-.5 4 2V44.500H61c3.500-6 6.500-14 7.500-23z" fill="#8fc8ee"/>
<path d="M37 44.500h36c5.500 0 5.500 8.500 0 9c5 .5 4.500 9-1.500 9.500H27z" fill="#8fc8ee"/>
<circle cx="61.200" cy="13.100" r="5.900" fill="#2a2384"/>
<path d="M34 23.300L64 21.600Q68.500 21.600 67.300 26L58.500 44.500H38Q33 45 30 52L25.500 63H15Q20 50 24 42Q27 38 31 37.700H46L50 28.500 35 29.500z" fill="#2a2384"/>
<path d="M7.500 62.900H65l-1 3.800H6.500z" fill="#2a2384"/>
<path d="M21.300 19.700L31.700 33.900" stroke="#2a2384" stroke-width="3.200" stroke-linecap="round"/><path d="M28.400 17.500L35 32.300" stroke="#2a2384" stroke-width="2" stroke-linecap="round"/>
<path d="M40 47.500L36.500 60.500M50.500 47.500L47 60.500M38.500 54.500h10M38.300 44.500L28.400 61.800" stroke="#2a2384" stroke-width="1.100" fill="none"/></g></svg></div>
<div class="fn" style="left:123px;top:104px">001.png</div>
<div class="th" style="left:236px;top:33px;width:90px;height:67px"><svg viewBox="0 0 90 67" preserveAspectRatio="none"><defs><filter id="b3" x="-5%" y="-5%" width="110%" height="110%"><feGaussianBlur stdDeviation="0.9"/></filter></defs><g filter="url(#b3)"><rect x="-5" y="-5" width="100" height="77" fill="#eef0ee"/>
<path d="M55 30c8-6 20-8 40-4v20H50z" fill="#8c968a"/>
<path d="M12 40c-2-14 4-24 12-26 4-6 10-8 14-6 6-2 10 2 12 8 6 2 10 8 8 14 2 4 0 8-4 12z" fill="#5a6656"/>
<path d="M-5 -5h22c2 6 0 10-2 12 4 6 4 14 2 20l2 12H-5z" fill="#3a4636"/>
<rect x="-5" y="37" width="100" height="36" fill="#8b8985"/>
<rect x="-5" y="52" width="100" height="20" fill="#a3a19d"/><ellipse cx="60" cy="60" rx="24" ry="4" fill="#b8b8b6"/><ellipse cx="20" cy="64" rx="16" ry="3" fill="#8a8884"/>
<rect x="70" y="41" width="16" height="8" rx="3" fill="#a8583c"/><rect x="58" y="40" width="16" height="9" rx="3" fill="#b05a34"/><rect x="44" y="40" width="19" height="11" rx="3" fill="#b85a2c"/><rect x="28" y="40" width="21" height="12" rx="3" fill="#c0602a"/>
<rect x="10" y="40" width="23" height="13" rx="3" fill="#c86c28"/>
<rect x="13" y="39" width="16" height="6" rx="2" fill="#7a5658"/><rect x="31" y="39" width="14" height="5" rx="2" fill="#74504e"/><rect x="47" y="39" width="13" height="5" rx="2" fill="#7a5450"/><rect x="61" y="39" width="10" height="4" rx="2" fill="#7a5a58"/>
<rect x="10" y="52" width="76" height="2.500" fill="#5e5c58"/></g></svg></div>
<div class="fn" style="left:229px;top:104px">4c853f4b8ffb16<br>72020dbec04b<br>456477.jpg</div>
<div class="th" style="left:342px;top:33px;width:90px;height:67px"><svg viewBox="0 0 90 67" preserveAspectRatio="none"><defs><filter id="b4" x="-5%" y="-5%" width="110%" height="110%"><feGaussianBlur stdDeviation="0.9"/></filter></defs><g filter="url(#b4)"><rect x="-5" y="-5" width="100" height="77" fill="#c6ceb4"/>
<path d="M-5 -5h100v9L70 14H27L-5 6z" fill="#d2d2ce"/>
<rect x="27" y="14" width="43" height="26" fill="#c4ccb4"/>
<path d="M70 14l25-10v32l-25 2z" fill="#b6bea6"/>
<rect x="75" y="18" width="7" height="10" fill="#f4f6f0"/>
<path d="M42 40h12l-2 32H24z" fill="#c9bda8"/>
<path d="M-5 30l36 2 8 8-14 32H-5z" fill="#3a3234"/>
<path d="M-5 30l34 1v6l-34 4z" fill="#e4e4e2"/><rect x="0" y="32" width="5" height="5" fill="#1c1a1a"/><rect x="13" y="32" width="4" height="4" fill="#1c1a1a"/><rect x="22" y="32" width="3" height="3" fill="#1c1a1a"/>
<path d="M-5 42l12 2 2 28H-5z" fill="#e8e8e6"/>
<path d="M22 42l8-4 4 2-8 30-12 0z" fill="#8a7880"/><path d="M6 44l12-4-2 14-12 4z" fill="#5a5458"/>
<path d="M52 34l30-4 4 40H58z" fill="#3a3234"/><path d="M60 30c3-4 8-3 9 2l1 10h-10z" fill="#2c2a26"/>
<path d="M52 36l6 2 8 32h-8z" fill="#8a747c"/>
<path d="M76 28l14-2v10l-12 2z" fill="#9a8480"/>
<path d="M81 46c4-3 9-3 14 0v26H82z" fill="#f2f2f0"/></g></svg></div>
<div class="fn" style="left:335px;top:104px">4e2b004ce787f<br>b204c571187fe<br>5b902d.jpg</div>
<div class="th" style="left:448px;top:40px;width:90px;height:60px"><svg viewBox="0 0 90 60" preserveAspectRatio="none"><defs><filter id="b5" x="-5%" y="-5%" width="110%" height="110%"><feGaussianBlur stdDeviation="0.8"/></filter></defs><g filter="url(#b5)"><rect x="-5" y="-5" width="100" height="70" fill="#c8c8c4"/>
<rect x="-5" y="-5" width="100" height="27" fill="#6a6660"/><rect x="-5" y="-5" width="100" height="13" fill="#4a4a48"/>
<rect x="65" y="12" width="30" height="10" fill="#8a8278"/><rect x="-5" y="14" width="14" height="8" fill="#5a5854"/>
<rect x="-5" y="50" width="100" height="14" fill="#aaaaa6"/>
<path d="M3 30c1-5 6-9 12-11 4-3 10-4 18-4 10 0 18 1 22 4l10 8c8 1 16 4 17 9v8c0 4-3 7-8 7l-44 2c-4 0-8-1-10-3L8 47c-3 0-5-3-5-7z" fill="#f2f2f2"/>
<path d="M13 27c2-5 8-9 18-9h12c6 0 10 1 13 4l6 6z" fill="#4c4e52"/><rect x="29" y="18" width="2" height="10" fill="#e8e8e8"/>
<path d="M62 34l19 1v5l-17 1z" fill="#2e3034"/>
<circle cx="8" cy="40" r="5.500" fill="#2a2a2c"/><circle cx="8" cy="40" r="2.800" fill="#b4b4b4"/>
<circle cx="42" cy="48" r="7" fill="#2a2a2c"/><circle cx="42" cy="48" r="3.600" fill="#b8b8b8"/>
<rect x="71" y="43" width="9" height="4" fill="#e0b030"/><rect x="14" y="32" width="4" height="4" fill="#c03030"/></g></svg></div>
<div class="fn" style="left:441px;top:104px">6adbd4458809<br>1b287fb08d1ff4<br>120373.jpg</div>
<div class="th" style="left:554px;top:47px;width:90px;height:53px"><svg viewBox="0 0 90 53" preserveAspectRatio="none"><defs><filter id="b6" x="-5%" y="-5%" width="110%" height="110%"><feGaussianBlur stdDeviation="0.8"/></filter></defs><g filter="url(#b6)"><rect x="-5" y="-5" width="100" height="63" fill="#8a7e80"/>
<rect x="-5" y="-5" width="36" height="32" fill="#2a2e32"/><rect x="8" y="2" width="6" height="22" fill="#4a6a6a"/><rect x="18" y="0" width="12" height="22" fill="#5a6a70"/>
<rect x="30" y="-5" width="20" height="18" fill="#7a5a5a"/>
<rect x="48" y="-5" width="47" height="22" fill="#9aa0a4"/><rect x="50" y="2" width="10" height="8" fill="#6a8a5a"/><rect x="62" y="2" width="16" height="4" fill="#e0e6ec"/><rect x="62" y="6" width="16" height="4" fill="#3a7ac0"/><rect x="80" y="-5" width="15" height="23" fill="#4a4446"/>
<rect x="-5" y="25" width="26" height="33" fill="#5a5658"/>
<path d="M62 16l6 2 3 14-2 10-8 2z" fill="#8a1420"/>
<path d="M34 11h30l3 4-2 10H30z" fill="#5a6480"/><path d="M34 10.500h31l1 2H33z" fill="#7a1822"/>
<path d="M30 23h36l3 10-2 8H12c0-6 4-10 8-12z" fill="#b4202e"/><ellipse cx="42" cy="28" rx="12" ry="3" fill="#c8404c"/><ellipse cx="36" cy="29" rx="4" ry="1.500" fill="#f0d0d4"/><ellipse cx="46" cy="30" rx="4" ry="1.500" fill="#f0d0d4"/>
<path d="M10 41c0-2 2-3 4-3h46c2 0 3 1 3 3v7c0 3-2 5-5 5H16c-3 0-6-2-6-5z" fill="#e84820"/>
<path d="M22 38h24l-2 5H24z" fill="#5a1a20"/><ellipse cx="18" cy="39" rx="5" ry="2.200" fill="#f6ece4"/><ellipse cx="52" cy="42" rx="7" ry="2.500" fill="#f6ece4"/></g></svg></div>
<div class="fn" style="left:547px;top:104px">9afad761ad1f5<br>9775bdc0d517<br>79f22ed.jpg</div>
<div class="th" style="left:660px;top:49px;width:90px;height:51px"><svg viewBox="0 0 90 51" preserveAspectRatio="none"><defs><filter id="b7" x="-5%" y="-5%" width="110%" height="110%"><feGaussianBlur stdDeviation="0.9"/></filter></defs><g filter="url(#b7)"><rect x="-5" y="-5" width="100" height="61" fill="#dcdad4"/>
<rect x="-5" y="-5" width="25" height="30" fill="#b8b4ac"/><rect x="20" y="-5" width="22" height="30" fill="#e8e8e4"/><rect x="42" y="-5" width="38" height="30" fill="#c8c6c0"/>
<rect x="36" y="2" width="5" height="14" fill="#f6f6f4"/><rect x="80" y="-5" width="15" height="25" fill="#fafaf8"/><path d="M70 20l25-2v24l-20-4z" fill="#d8d4cc"/>
<path d="M-5 26L20 23h50l25 16v20H-5z" fill="#c88844"/>
<path d="M52 44l30-2 10 6v10H58z" fill="#f0d8b0"/><rect x="10" y="30" width="18" height="5" fill="#e0a868"/>
<path d="M12 13h5l1 4 6-4 3 1v13H13z" fill="#3a342e"/>
<path d="M28 15h8l3 20-9 1z" fill="#2e2a26"/>
<path d="M38 14l22-1 3 26H42z" fill="#3c3630"/><rect x="44" y="14" width="12" height="8" fill="#5a4a3a"/>
<path d="M62 13c5-2 9 1 9 6l1 23H62z" fill="#e8e4dc"/>
<path d="M40 38h26l2 6H38z" fill="#d8d4cc"/></g></svg></div>
<div class="fn" style="left:653px;top:104px">9f553ad8fccfb1<br>9669e266d8730<br>0a7f2.jpg</div>
<div class="th" style="left:24px;top:172px;width:90px;height:60px"><svg viewBox="0 0 90 60" preserveAspectRatio="none"><defs><filter id="b8" x="-5%" y="-5%" width="110%" height="110%"><feGaussianBlur stdDeviation="0.7"/></filter></defs><g filter="url(#b8)"><rect x="-5" y="-5" width="100" height="70" fill="#dcdcdc"/>
<rect x="-5" y="28" width="100" height="10" fill="#c0c4c4"/><rect x="-5" y="34" width="20" height="6" fill="#8a9484"/>
<rect x="-5" y="40" width="100" height="25" fill="#b0aca4"/><rect x="-5" y="52" width="50" height="12" fill="#c4c0ba"/>
<path d="M10 20c0-5 3-9 8-10l60-1c4 0 6 3 6 7v22c0 2-1 3-3 3L40 52H16c-4 0-6-3-6-7z" fill="#f4f6f8"/>
<path d="M16 10l62-1c4 0 6 3 6 6L42 12 14 14z" fill="#2a2e32"/>
<path d="M13 17c1-3 3-4 6-4l20-1 1 22-10 4-17-1z" fill="#23272b"/><path d="M15 17l22-2v8l-22 3z" fill="#5a6670"/>
<path d="M43 13l41 5v9l-41 3z" fill="#2c3034"/>
<path d="M49 13.500v16M56 14.500v15M63 15.500v14M70 16.500v12M77 17.500v10" stroke="#c8ccd0" stroke-width="1.300"/>
<path d="M10 42l30-2 44-7v7L50 50l-10 2H16c-4 0-6-3-6-6z" fill="#2a7ac8"/>
<path d="M12 45h26v6H16c-2 0-4-2-4-4z" fill="#1e64b0"/>
<circle cx="51" cy="46" r="5.500" fill="#1a1a1c"/><circle cx="51" cy="46" r="2.500" fill="#9a9a9a"/><circle cx="78" cy="39" r="4.200" fill="#1a1a1c"/><circle cx="78" cy="39" r="1.800" fill="#8a8a8a"/>
<rect x="4" y="15" width="2.500" height="8" fill="#222"/><rect x="14" y="38" width="8" height="3" fill="#e8eef4"/></g></svg></div>
<div class="fn" style="left:17px;top:236px">37df3482482fc6<br>720e698000367<br>e3232.jpg</div>
<div class="th" style="left:130px;top:180px;width:90px;height:52px"><svg viewBox="0 0 90 52" preserveAspectRatio="none"><defs><radialGradient id="g9" cx=".5" cy=".45" r=".75"><stop offset="0" stop-color="#146cb8"/><stop offset=".55" stop-color="#0d559e"/><stop offset="1" stop-color="#07326c"/></radialGradient><filter id="b9"><feGaussianBlur stdDeviation=".5"/></filter></defs>
<rect width="90" height="52" fill="url(#g9)"/>
<text x="46.500" y="22" font-size="19" font-weight="500" text-anchor="middle" fill="#dceeff" font-family="Noto Sans CJK SC,sans-serif" filter="url(#b9)">学车</text>
<g filter="url(#b9)"><ellipse cx="47" cy="44.500" rx="24" ry="1.800" fill="#06305f"/><path d="M24 35c0-2 3-4 9-4h30c5 0 7.500 2 7.500 5v4c0 2-2 3-4 3H27c-2 0-3-2-3-4z" fill="#d8202c"/><path d="M41 31l3-3h8l4 3z" fill="#7a1a24"/><circle cx="48" cy="28" r="1.800" fill="#e8c8a0"/>
<circle cx="32.200" cy="41" r="3.800" fill="#1a1a1c"/><circle cx="32.200" cy="41" r="1.900" fill="#e8e8e8"/><circle cx="62.200" cy="41" r="3.800" fill="#1a1a1c"/><circle cx="62.200" cy="41" r="1.900" fill="#e8e8e8"/><rect x="36" y="41" width="22" height="1.500" fill="#e8d8d8"/></g></svg></div>
<div class="fn" style="left:123px;top:236px">49c9d0557ccf7<br>973b97276bd4<br>6576399.jpg</div>
<div class="th" style="left:236px;top:172px;width:90px;height:60px"><svg viewBox="0 0 90 60" preserveAspectRatio="none"><defs><filter id="b10" x="-5%" y="-5%" width="110%" height="110%"><feGaussianBlur stdDeviation="0.9"/></filter></defs><g filter="url(#b10)"><rect x="-5" y="-5" width="100" height="70" fill="#141f2c"/>
<rect x="-5" y="-5" width="100" height="30" fill="#1a5cc0"/><rect x="-5" y="-5" width="100" height="9" fill="#0c3c9a"/>
<rect x="-5" y="22" width="100" height="13" fill="#44557c"/><rect x="0" y="25" width="40" height="9" fill="#7a7658"/>
<rect x="43.500" y="4" width="9" height="26" fill="#4a78b0"/><rect x="45" y="6" width="6" height="20" fill="#6a90c0"/><rect x="54" y="12" width="8" height="18" fill="#8aa080"/><rect x="56" y="14" width="3" height="12" fill="#c8d060"/><rect x="64" y="10" width="9" height="20" fill="#93a8c8"/><rect x="66" y="10" width="5" height="3" fill="#f0f4f8"/><rect x="80" y="18" width="12" height="16" fill="#3a4a90"/><rect x="36" y="16" width="6" height="14" fill="#5a6a8a"/><rect x="60" y="28" width="22" height="8" fill="#5a6a70"/>
<ellipse cx="38" cy="42" rx="24" ry="9" fill="#3c4a1c"/>
<ellipse cx="38" cy="42" rx="23" ry="8" fill="none" stroke="#b8c020" stroke-width="2.400"/>
<path d="M-4 41C16 37 30 39 44 40S76 38 94 35" stroke="#d0cc24" stroke-width="2.400" fill="none"/>
<path d="M8 34C20 36 30 42 36 50" stroke="#b0b020" stroke-width="1.800" fill="none"/><path d="M66 34C56 38 48 44 46 52" stroke="#b0b020" stroke-width="1.800" fill="none"/>
<path d="M30 20C31 30 34 40 44 64" stroke="#f0dc24" stroke-width="5.500" fill="none"/><path d="M31 22C36 34 46 46 60 64" stroke="#e0d020" stroke-width="2.200" fill="none"/>
<ellipse cx="25" cy="43" rx="5" ry="2.500" fill="#2c4a1c"/><ellipse cx="52" cy="44" rx="5" ry="2.500" fill="#2c4a1c"/>
<ellipse cx="82" cy="52" rx="5" ry="3" fill="#1ec03c"/><circle cx="83" cy="27" r="2" fill="#5050f0"/>
<rect x="-5" y="50" width="26" height="14" fill="#24344e"/><rect x="62" y="46" width="16" height="16" fill="#1a2838"/></g></svg></div>
<div class="fn" style="left:229px;top:236px">521.jpg</div>
<div class="th" style="left:342px;top:175px;width:90px;height:57px"><svg viewBox="0 0 90 57" preserveAspectRatio="none"><defs><filter id="b11" x="-5%" y="-5%" width="110%" height="110%"><feGaussianBlur stdDeviation="0.9"/></filter></defs><g filter="url(#b11)"><rect x="-5" y="-5" width="100" height="67" fill="#a09a90"/>
<rect x="-5" y="-5" width="100" height="27" fill="#2c8ae0"/><rect x="-5" y="12" width="100" height="10" fill="#58a4e8"/>
<ellipse cx="20" cy="4" rx="11" ry="2.800" fill="#e4eef8"/><ellipse cx="51" cy="4" rx="12" ry="2.800" fill="#eaf2fa"/><ellipse cx="83" cy="13" rx="6" ry="3" fill="#eef4fa"/><ellipse cx="60" cy="17" rx="5" ry="1.500" fill="#dcecf8"/>
<path d="M4 20l18-1h44l20 3v17H4z" fill="#c8ccc8"/><rect x="2" y="20" width="8" height="18" fill="#eceeea"/>
<rect x="24" y="24" width="40" height="3" fill="#eceeea"/><rect x="26" y="27" width="36" height="9" fill="#3a6a62"/>
<ellipse cx="8" cy="27" rx="4" ry="5" fill="#2a5a2a"/><ellipse cx="20" cy="27" rx="4" ry="5" fill="#2a5a2a"/><ellipse cx="58" cy="27" rx="4" ry="5" fill="#2a5a2a"/><ellipse cx="70" cy="27" rx="4" ry="5" fill="#2a5a2a"/><ellipse cx="79" cy="28" rx="3.500" ry="4.500" fill="#2a5a2a"/>
<rect x="4" y="38" width="82" height="7" fill="#e2e2e0"/><rect x="4" y="39" width="82" height="1.500" fill="#b46a5a"/><rect x="4" y="43.500" width="82" height="2.500" fill="#55555a"/>
<rect x="40" y="42" width="14" height="6" rx="2" fill="#ececec"/></g></svg></div>
<div class="fn" style="left:335px;top:236px">927904b9de74<br>6dde58c3860af<br>ac800a8.png</div>
<div class="th" style="left:448px;top:172px;width:90px;height:60px"><svg viewBox="0 0 90 60" preserveAspectRatio="none"><defs><filter id="b12" x="-5%" y="-5%" width="110%" height="110%"><feGaussianBlur stdDeviation="1.0"/></filter></defs><g filter="url(#b12)"><rect x="-5" y="-5" width="100" height="70" fill="#2a3038"/>
<rect x="-5" y="-5" width="100" height="28" fill="#1c3e50"/><rect x="-5" y="-5" width="100" height="10" fill="#112c3c"/>
<ellipse cx="34" cy="11" rx="32" ry="3.500" fill="#5a8a9a"/><ellipse cx="74" cy="19.500" rx="20" ry="3" fill="#f0a050"/><ellipse cx="78" cy="14" rx="14" ry="2" fill="#7a7a80"/>
<path d="M-5 13l52 3v4L-5 20z" fill="#8a9aa0"/>
<rect x="-5" y="19" width="100" height="8" fill="#1a2026"/><rect x="50" y="15" width="10" height="9" fill="#2a3a6a"/><rect x="76" y="8" width="1" height="14" fill="#1a2026"/>
<path d="M-5 38L34 26" stroke="#c04858" stroke-width="3"/><path d="M-5 44L32 29" stroke="#8a3848" stroke-width="2"/><path d="M-5 31L30 25" stroke="#6a6a74" stroke-width="2"/>
<path d="M28 64L42 30" stroke="#b8a8ac" stroke-width="3"/><path d="M58 64L50 34" stroke="#7a8088" stroke-width="2.500"/><path d="M94 58L58 32" stroke="#5e646c" stroke-width="3"/><path d="M60 40L52 30" stroke="#c08878" stroke-width="1.500"/>
<rect x="40" y="26" width="8" height="8" fill="#d0d4d8"/><rect x="68" y="38" width="10" height="4" fill="#a84848"/>
<path d="M39 38h12l2 14H37z" fill="#0e1114"/></g></svg></div>
<div class="fn" style="left:441px;top:236px">2018071313525<br>46187.jpg</div>
<div class="th" style="left:554px;top:163px;width:90px;height:69px"><svg viewBox="0 0 90 69" preserveAspectRatio="none"><defs><filter id="b13" x="-5%" y="-5%" width="110%" height="110%"><feGaussianBlur stdDeviation="0.9"/></filter></defs><g filter="url(#b13)"><rect x="-5" y="-5" width="100" height="79" fill="#e8e0d4"/>
<rect x="-5" y="-5" width="100" height="30" fill="#dcd4c8"/>
<path d="M14 19L54 16 92 20" stroke="#fff" stroke-width="2.500" fill="none"/><path d="M54 -2v18M88 -2v22M58 8h30M58 -2v10" stroke="#fff" stroke-width="1.800" fill="none"/>
<rect x="-5" y="24" width="55" height="26" fill="#e8d8dc"/>
<path d="M5 46V33c0-9 9-9 9 0v13z" fill="#a080c0"/><path d="M20 45V33c0-7 7-7 7 0v12z" fill="#a888c4"/><path d="M30 44V34c0-5 4.500-5 4.500 0v10z" fill="#b494c8"/><rect x="38" y="32" width="8" height="12" fill="#e8c8cc"/>
<rect x="50" y="26" width="42" height="24" fill="#f0d0a0"/><rect x="76" y="32" width="10" height="18" fill="#d8a050"/><rect x="54" y="30" width="16" height="10" fill="#f8e4c0"/>
<rect x="-5" y="50" width="100" height="24" fill="#ece4d8"/><ellipse cx="42" cy="60" rx="30" ry="5" fill="#f8f4ee"/>
<rect x="6" y="44" width="7" height="5" rx="2" fill="#6a2a30"/><rect x="18" y="44" width="10" height="7" rx="2" fill="#6a2a30"/><rect x="34" y="45" width="8" height="6" rx="2" fill="#742e36"/><rect x="44" y="44" width="7" height="5" rx="2" fill="#6a2a30"/><rect x="54" y="44" width="8" height="3" fill="#7a4a3a"/></g></svg></div>
<div class="fn" style="left:547px;top:236px">b77d7739796c8<br>e5e6d61a17bd<br>ab530bf.jpg</div>
<div class="th" style="left:660px;top:179px;width:90px;height:53px"><svg viewBox="0 0 90 53" preserveAspectRatio="none"><defs><filter id="b14" x="-5%" y="-5%" width="110%" height="110%"><feGaussianBlur stdDeviation="0.9"/></filter></defs><g filter="url(#b14)"><rect x="-5" y="-5" width="100" height="63" fill="#c8c4bc"/>
<rect x="-5" y="-5" width="100" height="40" fill="#4a76c0"/><rect x="-5" y="-5" width="100" height="12" fill="#3464b4"/><rect x="-5" y="22" width="100" height="8" fill="#88a4d4"/><rect x="-5" y="28" width="100" height="7" fill="#b8c4d4"/>
<ellipse cx="74" cy="5" rx="19" ry="6" fill="#eef2f8"/><ellipse cx="29" cy="18" rx="11" ry="3.500" fill="#e4ecf6"/><ellipse cx="68" cy="18" rx="11" ry="5" fill="#e8eef6"/><ellipse cx="14" cy="27" rx="16" ry="2.500" fill="#d4e0f0"/><ellipse cx="8" cy="10" rx="5" ry="2" fill="#dce6f4"/><ellipse cx="50" cy="27" rx="14" ry="2" fill="#d4e0f0"/>
<rect x="9" y="35" width="12" height="8" rx="2" fill="#f4f4f2"/><rect x="23" y="35" width="12" height="8" rx="2" fill="#f4f4f2"/><rect x="37" y="35" width="12" height="8" rx="2" fill="#f4f4f2"/><rect x="51" y="35" width="11" height="8" rx="2" fill="#f4f4f2"/><rect x="66" y="34" width="14" height="9" rx="2" fill="#f8f8f6"/>
<rect x="10" y="36" width="10" height="2" fill="#5a6470"/><rect x="24" y="36" width="10" height="2" fill="#5a6470"/><rect x="38" y="36" width="10" height="2" fill="#5a6470"/><rect x="52" y="36" width="9" height="2" fill="#5a6470"/><rect x="68" y="35" width="10" height="2" fill="#5a6470"/>
<rect x="9" y="42.500" width="72" height="2.200" fill="#4a4640"/></g></svg></div>
<div class="fn" style="left:653px;top:236px">d92f238c439c4<br>53a9edb2f05a4<br>4db232.jpg</div>
<div class="th" style="left:24px;top:294px;width:90px;height:20px;background:#fff"><svg viewBox="0 0 90 20"><ellipse cx="45" cy="13" rx="19" ry="12" fill="#6c6c9c"/></svg></div>
</div>
<svg class="abs" style="left:588px;top:290px" width="14" height="21" viewBox="0 0 14 21"><path d="M1 1v15.500l3.600-3.400 2.800 6.400 2.600-1.100-2.800-6.200h5z" fill="#fff" stroke="#000" stroke-width="1"/></svg>
</div><!-- /dlg -->
<!-- IME bar -->
<div class="abs" style="left:1678px;top:885px;width:179px;height:25px;background:#fff;border:1px solid #cdd6e0;border-radius:2px"></div>
<svg class="abs" style="left:1653px;top:879px" width="36" height="33" viewBox="0 0 36 33"><g transform="rotate(-12 18 17)"><rect x="4" y="4" width="28" height="26" rx="4" fill="#f0541f"/><path d="M27.500 9.500C22 8 9 8 8.500 12.800S27 14.500 27.200 20.500 13 25.500 7 23.500" fill="none" stroke="#fff" stroke-width="4.200" stroke-linecap="round"/></g></svg>
<div class="abs" style="left:1692px;top:887px;font-size:16px;line-height:22px;font-weight:700;color:#1469c7;transform:scale(1,.82)">中</div>
<svg class="abs" style="left:1717px;top:890px" width="14" height="14" viewBox="0 0 14 14"><circle cx="3" cy="4" r="1.700" fill="none" stroke="#1469c7" stroke-width="1.300"/><path d="M9 6.500a1.700 1.700 0 1 1 1.600 1.800c0 1.600-.8 2.800-2 3.400.8-1 1-2 .6-3.200z" fill="#1469c7"/></svg>
<svg class="abs" style="left:1741px;top:889px" width="14" height="17" viewBox="0 0 14 17"><rect x="4.200" y="0" width="5.600" height="10" rx="2.800" fill="#1469c7"/><path d="M1.500 7.500a5.500 5.500 0 0 0 11 0M7 13v3M4.500 16h5" stroke="#1469c7" stroke-width="1.400" fill="none"/></svg>
<svg class="abs" style="left:1765px;top:892px" width="16" height="12" viewBox="0 0 16 12"><rect x="0" y="0" width="16" height="12" rx="2" fill="#1469c7"/><g fill="#fff"><rect x="2" y="2" width="2" height="2"/><rect x="5" y="2" width="2" height="2"/><rect x="8" y="2" width="2" height="2"/><rect x="11" y="2" width="3" height="2"/><rect x="2" y="5" width="2" height="2"/><rect x="5" y="5" width="2" height="2"/><rect x="8" y="5" width="2" height="2"/><rect x="11" y="5" width="3" height="2"/><rect x="3" y="8.200" width="10" height="1.800"/></g></svg>
<svg class="abs" style="left:1788px;top:887px" width="18" height="20" viewBox="0 0 18 20"><defs><linearGradient id="shirt" x1="0" y1="0" x2="0" y2="1"><stop offset="0" stop-color="#e84a8a"/><stop offset="1" stop-color="#7a6af0"/></linearGradient></defs><path d="M1 7l4-3c1 1.500 5 1.500 6 0l4 3-2 3-1.500-1v9h-7v-9L3 10z" fill="url(#shirt)"/><circle cx="14.500" cy="3" r="2.600" fill="#ea3c3c"/></svg>
<svg class="abs" style="left:1813px;top:891px" width="14" height="14" viewBox="0 0 14 14"><g fill="#1469c7"><rect x="0" y="0" width="6" height="6" rx="2"/><rect x="8" y="0" width="6" height="6" rx="2"/><rect x="0" y="8" width="6" height="6" rx="2"/><rect x="8" y="8" width="6" height="6" rx="2"/></g></svg>
<svg class="abs" style="left:1834px;top:888px" width="22" height="20" viewBox="0 0 22 20"><circle cx="10" cy="11" r="8" fill="#f4f0ec"/><path d="M2 8c2-4 12-6 16-2l-2 4c-4-1-8 0-12 2z" fill="#e0742a"/><rect x="4" y="8" width="5" height="3" rx="1" fill="#3a2a2a"/><path d="M8 15c2 1 4 0 5-1" stroke="#3a2a2a" stroke-width="1" fill="none"/><path d="M18 2l.8 2 2 .8-2 .8-.8 2-.8-2-2-.8 2-.8z" fill="#f4d040"/></svg>
<!-- scroll indicator -->
<svg class="abs" style="left:1908px;top:856px" width="12" height="56" viewBox="0 0 12 56"><rect x="3" y="1" width="6" height="52" rx="3" fill="#5e656e"/><rect x="4.300" y="24" width="3.400" height="28" fill="#3aa0e0"/><circle cx="6" cy="52" r="5.500" fill="#5e656e"/><circle cx="6" cy="52" r="4" fill="#3aa0e0"/></svg>
</body>
</html>
